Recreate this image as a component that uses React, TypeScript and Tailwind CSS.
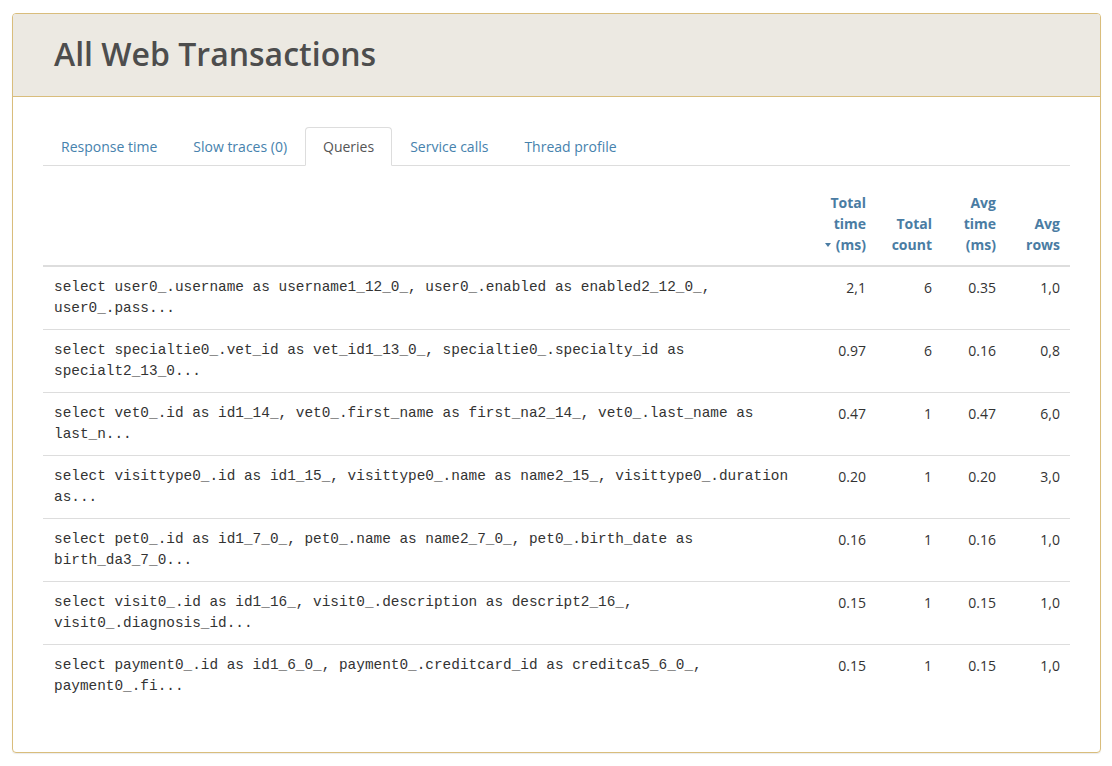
const rows = [
  {
    q: "select user0_.username as username1_12_0_, user0_.enabled as enabled2_12_0_, user0_.pass...",
    total: "2,1",
    count: "6",
    avg: "0.35",
    rows: "1,0",
  },
  {
    q: "select specialtie0_.vet_id as vet_id1_13_0_, specialtie0_.specialty_id as specialt2_13_0...",
    total: "0.97",
    count: "6",
    avg: "0.16",
    rows: "0,8",
  },
  {
    q: "select vet0_.id as id1_14_, vet0_.first_name as first_na2_14_, vet0_.last_name as last_n...",
    total: "0.47",
    count: "1",
    avg: "0.47",
    rows: "6,0",
  },
  {
    q: "select visittype0_.id as id1_15_, visittype0_.name as name2_15_, visittype0_.duration as...",
    total: "0.20",
    count: "1",
    avg: "0.20",
    rows: "3,0",
  },
  {
    q: "select pet0_.id as id1_7_0_, pet0_.name as name2_7_0_, pet0_.birth_date as birth_da3_7_0...",
    total: "0.16",
    count: "1",
    avg: "0.16",
    rows: "1,0",
  },
  {
    q: "select visit0_.id as id1_16_, visit0_.description as descript2_16_, visit0_.diagnosis_id...",
    total: "0.15",
    count: "1",
    avg: "0.15",
    rows: "1,0",
  },
  {
    q: "select payment0_.id as id1_6_0_, payment0_.creditcard_id as creditca5_6_0_, payment0_.fi...",
    total: "0.15",
    count: "1",
    avg: "0.15",
    rows: "1,0",
  },
];

const tabs = ["Response time", "Slow traces (0)", "Queries", "Service calls", "Thread profile"];

export default function App() {
  return (
    <div
      className="min-h-screen bg-white pt-[13px] pl-[12px]"
      style={{ fontFamily: '"Open Sans", "Liberation Sans", sans-serif' }}
    >
      <div className="w-[1089px] h-[740px] rounded-[4px] border border-[#d9bd7c] shadow-[0_1px_1px_rgba(0,0,0,0.08)] overflow-hidden">
        <div className="h-[83px] bg-[#ece9e2] border-b border-[#d9bd7c] flex items-center pl-[41px]">
          <h1 className="text-[32px] font-semibold text-[#4d4d4d] leading-none -mt-[2px]">
            All Web Transactions
          </h1>
        </div>

        <div className="px-[30px] pt-[30px]">
          <ul className="flex border-b border-[#dddddd]">
            {tabs.map((t) => (
              <li key={t} className="-mb-px">
                <span
                  className={
                    t === "Queries"
                      ? "block px-[17px] pt-[9px] pb-[8px] text-[14px] leading-[20px] text-[#555555] bg-white border border-[#dddddd] border-b-transparent rounded-t-[4px]"
                      : "block px-[17px] pt-[9px] pb-[8px] text-[14px] leading-[20px] text-[#4682ad] border border-transparent"
                  }
                >
                  {t}
                </span>
              </li>
            ))}
          </ul>

          <table className="mt-[18px] w-full table-fixed border-collapse text-[14px] leading-[21px] text-[#333333]">
            <thead>
              <tr className="border-b-2 border-[#dddddd]">
                <th className="px-[10px] pt-[8px] pb-[10px]"></th>
                <th className="w-[63px] px-[10px] pt-[8px] pb-[10px] text-right align-bottom font-bold text-[#4a7ca3]">
                  Total time{" "}
                  <span className="whitespace-nowrap">
                    <span className="inline-block align-middle mr-[5px] mb-[2px] w-0 h-0 border-l-[3.5px] border-r-[3.5px] border-t-[4px] border-l-transparent border-r-transparent border-t-[#4a7ca3]"></span>
                    (ms)
                  </span>
                </th>
                <th className="w-[66px] px-[10px] pt-[8px] pb-[10px] text-right align-bottom font-bold text-[#4a7ca3]">
                  Total count
                </th>
                <th className="w-[64px] px-[10px] pt-[8px] pb-[10px] text-right align-bottom font-bold text-[#4a7ca3]">
                  Avg time (ms)
                </th>
                <th className="w-[64px] px-[10px] pt-[8px] pb-[10px] text-right align-bottom font-bold text-[#4a7ca3]">
                  Avg rows
                </th>
              </tr>
            </thead>
            <tbody>
              {rows.map((r, i) => (
                <tr key={i} className={i === 0 ? "" : "border-t border-[#dddddd]"}>
                  <td
                    className="pl-[11px] pr-[10px] py-[10px] align-top text-[14.4px] leading-[21px] text-[#333333] break-words"
                    style={{ fontFamily: '"Liberation Mono", "DejaVu Sans Mono", monospace' }}
                  >
                    <div className="h-[42px]">{r.q}</div>
                  </td>
                  <td className="px-[10px] py-[10px] align-top text-right">{r.total}</td>
                  <td className="px-[10px] py-[10px] align-top text-right">{r.count}</td>
                  <td className="px-[10px] py-[10px] align-top text-right">{r.avg}</td>
                  <td className="px-[10px] py-[10px] align-top text-right">{r.rows}</td>
                </tr>
              ))}
            </tbody>
          </table>
        </div>
      </div>
    </div>
  );
}
